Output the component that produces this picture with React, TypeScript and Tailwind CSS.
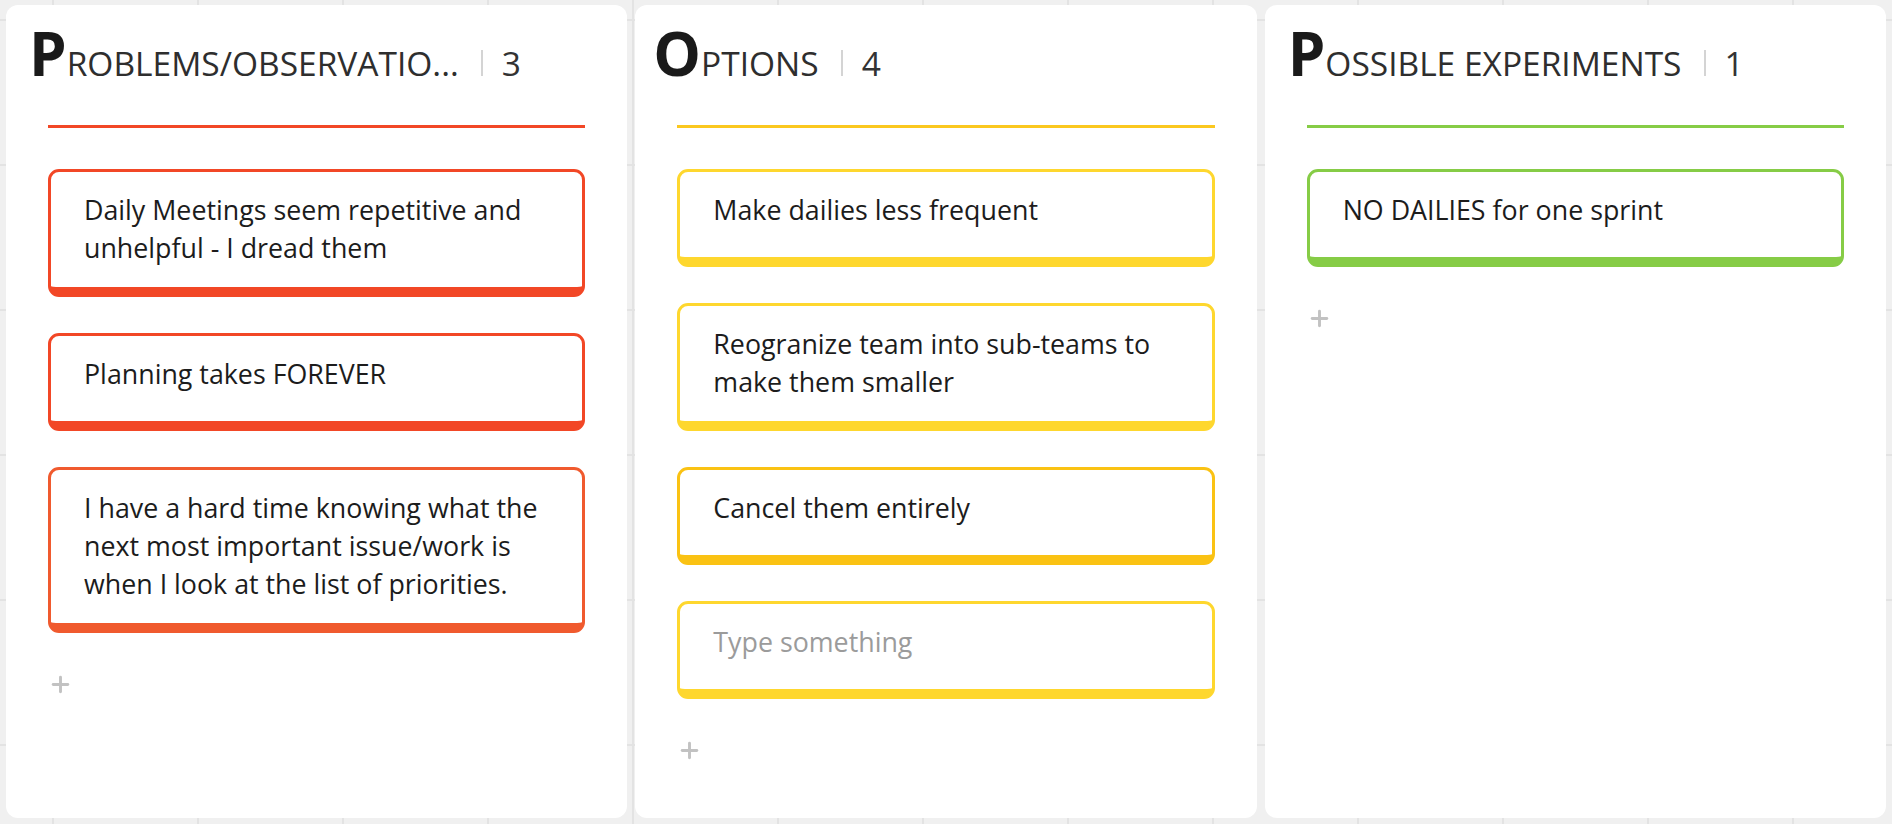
import { Plus } from "lucide-react";

type Card = { text: string; color: string; placeholder?: boolean };

type Column = {
  initial: string;
  rest: string;
  count: number;
  line: string;
  initialClass?: string;
  cards: Card[];
};

const columns: Column[] = [
  {
    initial: "P",
    rest: "ROBLEMS/OBSERVATIO...",
    count: 3,
    line: "bg-[#f24726]",
    cards: [
      { text: "Daily Meetings seem repetitive and unhelpful - I dread them", color: "border-[#f24726]" },
      { text: "Planning takes FOREVER", color: "border-[#f24726]" },
      {
        text: "I have a hard time knowing what the next most important issue/work is when I look at the list of priorities.",
        color: "border-[#f05a2e]",
      },
    ],
  },
  {
    initial: "O",
    rest: "PTIONS",
    count: 4,
    line: "bg-[#fbc81f]",
    initialClass: "-ml-[5px]",
    cards: [
      { text: "Make dailies less frequent", color: "border-[#fed72e]" },
      { text: "Reogranize team into sub-teams to make them smaller", color: "border-[#fed72e]" },
      { text: "Cancel them entirely", color: "border-[#fac213]" },
      { text: "Type something", color: "border-[#fed72e]", placeholder: true },
    ],
  },
  {
    initial: "P",
    rest: "OSSIBLE EXPERIMENTS",
    count: 1,
    line: "bg-[#86cc46]",
    cards: [{ text: "NO DAILIES for one sprint", color: "border-[#86cc46]" }],
  },
];

function StickyCard({ card }: { card: Card }) {
  return (
    <div
      className={`min-h-[98px] rounded-[11px] border-[3px] border-b-[10px] bg-white pl-[33px] pr-[28px] pt-[19px] pb-[20px] text-[26.8px] leading-[38px] ${card.color} ${
        card.placeholder ? "text-[#9b9b9b]" : "text-[#1c1c1c]"
      }`}
    >
      {card.text}
    </div>
  );
}

function BoardColumn({ col }: { col: Column }) {
  return (
    <div className="flex-1 rounded-[12px] bg-white">
      {/* Header */}
      <div className="flex items-baseline pl-[23px] pt-[18px]">
        <span className={`text-[60px] font-bold leading-[60px] text-[#1a1a1a] ${col.initialClass ?? ""}`}>
          {col.initial}
        </span>
        <span className="whitespace-nowrap text-[33.5px] leading-[40px] text-[#2e2e2e]">{col.rest}</span>
        <span className="ml-[22px] h-[26px] w-[2px] self-center translate-y-[10px] bg-[#d4d4d4]" />
        <span className="ml-[19px] text-[33.5px] leading-[40px] text-[#333333]">{col.count}</span>
      </div>

      <div className="px-[42px]">
        <div className={`mt-[42px] h-[3px] ${col.line}`} />

        {/* Cards */}
        <div className="mt-[41px] flex flex-col gap-[36px]">
          {col.cards.map((card, i) => (
            <StickyCard key={i} card={card} />
          ))}
        </div>

        <div className="mt-[3px] pt-[36px]">
          <Plus className="h-[25px] w-[25px] text-[#c2c2c2]" strokeWidth={2.8} />
        </div>
      </div>
    </div>
  );
}

export default function App() {
  return (
    <div className="h-[824px] w-full overflow-hidden bg-[#f0f0f0] bg-[linear-gradient(to_right,#e3e3e3_2px,transparent_2px),linear-gradient(to_bottom,#e3e3e3_2px,transparent_2px)] [background-size:145px_145px] [background-position:52px_19px] font-['Open_Sans',sans-serif]">
      <div className="flex h-full gap-[8px] px-[6px] pt-[5px] pb-[6px]">
        {columns.map((col, i) => (
          <BoardColumn key={i} col={col} />
        ))}
      </div>
    </div>
  );
}
